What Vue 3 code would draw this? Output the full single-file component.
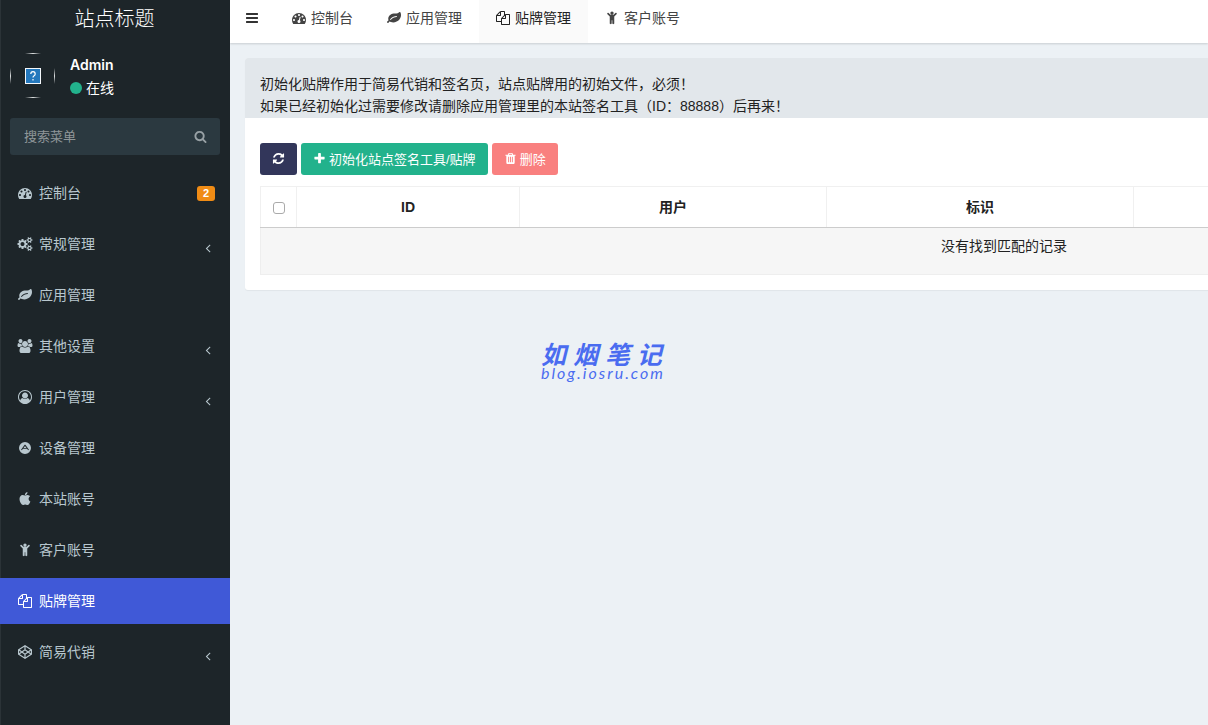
<template>
  <div class="wrapper">
    <aside class="sidebar">
      <a href="#" class="logo">站点标题</a>

      <div class="user-panel">
        <div class="avatar">
          <svg viewBox="0 0 16 16" width="16" height="16" aria-hidden="true">
            <rect width="16" height="16" fill="#f4f8fb" />
            <rect x="1" y="1" width="14" height="14" fill="#2478bd" />
            <path d="M5.8 6q0-2.3 2.2-2.3T10.2 6q0 1-1.1 1.7T8 9.5M8 11v1.4" fill="none" stroke="#fff" stroke-width="1.2" />
          </svg>
        </div>
        <div class="user-info">
          <strong>Admin</strong>
          <span class="status"><i class="dot"></i>在线</span>
        </div>
      </div>

      <form class="search" @submit.prevent>
        <input v-model="keyword" type="text" placeholder="搜索菜单" aria-label="搜索菜单" />
        <button type="submit" aria-label="搜索">
          <svg class="icon" viewBox="0 0 1792 1792"><path :d="icons.search" /></svg>
        </button>
      </form>

      <nav class="menu">
        <a
          v-for="item in menus"
          :key="item.title"
          href="#"
          class="menu-item"
          :class="{ active: item.title === current }"
          @click.prevent="current = item.title"
        >
          <svg
            class="icon"
            :class="{ wide: item.wide }"
            :viewBox="item.wide ? '0 0 1920 1792' : '0 0 1792 1792'"
          >
            <path :d="icons[item.icon]" fill-rule="evenodd" />
          </svg>
          <span>{{ item.title }}</span>
          <span v-if="item.badge" class="badge">{{ item.badge }}</span>
          <svg v-if="item.sub" class="icon arrow" viewBox="0 0 1792 1792">
            <path :d="icons.angle" />
          </svg>
        </a>
      </nav>
    </aside>

    <div class="main">
      <header class="navbar">
        <button class="toggle" type="button" aria-label="菜单">
          <svg class="icon" viewBox="0 0 1792 1792"><path :d="icons.bars" /></svg>
        </button>
        <a
          v-for="tab in tabs"
          :key="tab.title"
          href="#"
          class="tab"
          :class="{ active: tab.title === current }"
          @click.prevent="current = tab.title"
        >
          <svg class="icon" viewBox="0 0 1792 1792">
            <path :d="icons[tab.icon]" fill-rule="evenodd" />
          </svg>
          <span>{{ tab.title }}</span>
        </a>
      </header>

      <main class="content">
        <section class="panel">
          <div class="panel-heading">
            初始化贴牌作用于简易代销和签名页，站点贴牌用的初始文件，必须！<br />
            如果已经初始化过需要修改请删除应用管理里的本站签名工具（ID：88888）后再来！
          </div>
          <div class="panel-body">
            <div class="toolbar">
              <button type="button" class="btn btn-primary" aria-label="刷新">
                <svg class="icon" viewBox="0 0 1792 1792"><path :d="icons.refresh" /></svg>
              </button>
              <button type="button" class="btn btn-success">
                <svg class="icon" viewBox="0 0 1792 1792"><path :d="icons.plus" /></svg>
                <span>初始化站点签名工具/贴牌</span>
              </button>
              <button type="button" class="btn btn-danger">
                <svg class="icon" viewBox="0 0 1792 1792"><path :d="icons.trash" /></svg>
                <span>删除</span>
              </button>
            </div>

            <table>
              <colgroup>
                <col class="col-check" />
                <col class="col-id" />
                <col span="4" />
              </colgroup>
              <thead>
                <tr>
                  <th><input type="checkbox" aria-label="全选" /></th>
                  <th>ID</th>
                  <th>用户</th>
                  <th>标识</th>
                  <th></th>
                  <th></th>
                </tr>
              </thead>
              <tbody>
                <tr>
                  <td colspan="6">没有找到匹配的记录</td>
                </tr>
              </tbody>
            </table>
          </div>
        </section>
      </main>

      <div class="watermark">
        <span class="mark-name">如 烟 笔 记</span>
        <span class="mark-url">blog.iosru.com</span>
      </div>
    </div>
  </div>
</template>

<script setup>
import { ref } from 'vue';

const keyword = ref('');
const current = ref('贴牌管理');

const menus = [
  { title: '控制台', icon: 'dashboard', badge: 2 },
  { title: '常规管理', icon: 'cogs', wide: true, sub: true },
  { title: '应用管理', icon: 'leaf' },
  { title: '其他设置', icon: 'users', wide: true, sub: true },
  { title: '用户管理', icon: 'user', sub: true },
  { title: '设备管理', icon: 'device' },
  { title: '本站账号', icon: 'apple' },
  { title: '客户账号', icon: 'child' },
  { title: '贴牌管理', icon: 'files' },
  { title: '简易代销', icon: 'codepen', sub: true },
];

const tabs = [
  { title: '控制台', icon: 'dashboard' },
  { title: '应用管理', icon: 'leaf' },
  { title: '贴牌管理', icon: 'files' },
  { title: '客户账号', icon: 'child' },
];

const icons = {
  dashboard:
    'M384 1152q0-53-37.5-90.5t-90.5-37.5-90.5 37.5-37.5 90.5 37.5 90.5 90.5 37.5 90.5-37.5 37.5-90.5zm192-448q0-53-37.5-90.5t-90.5-37.5-90.5 37.5-37.5 90.5 37.5 90.5 90.5 37.5 90.5-37.5 37.5-90.5zm428 481l101-382q6-26-7.5-48.5t-38.5-29.5-48 6.5-30 39.5l-101 382q-60 5-107 43.5t-63 98.5q-20 77 20 146t117 89 146-20 89-117q16-60-6-117t-72-91zm660-33q0-53-37.5-90.5t-90.5-37.5-90.5 37.5-37.5 90.5 37.5 90.5 90.5 37.5 90.5-37.5 37.5-90.5zm-640-640q0-53-37.5-90.5t-90.5-37.5-90.5 37.5-37.5 90.5 37.5 90.5 90.5 37.5 90.5-37.5 37.5-90.5zm448 192q0-53-37.5-90.5t-90.5-37.5-90.5 37.5-37.5 90.5 37.5 90.5 90.5 37.5 90.5-37.5 37.5-90.5zm320 448q0 261-141 483-19 29-54 29h-1402q-35 0-54-29-141-221-141-483 0-182 71-348t191-286 286-191 348-71 348 71 286 191 191 286 71 348z',
  cogs:
    'M896 896q0-106-75-181t-181-75-181 75-75 181 75 181 181 75 181-75 75-181zm768 512q0-52-38-90t-90-38-90 38-38 90q0 53 37.5 90.5t90.5 37.5 90.5-37.5 37.5-90.5zm0-1024q0-52-38-90t-90-38-90 38-38 90q0 53 37.5 90.5t90.5 37.5 90.5-37.5 37.5-90.5zm-384 421v185q0 10-7 19.5t-16 10.5l-155 24q-11 35-32 76 34 48 90 115 7 11 7 20 0 12-7 19-23 30-82.5 89.5t-78.5 59.5q-11 0-21-7l-115-90q-37 19-77 31-11 108-23 155-7 24-30 24h-186q-11 0-20-7.5t-10-17.5l-23-153q-34-10-75-31l-118 89q-7 7-20 7-11 0-21-8-144-133-144-160 0-9 7-19 10-14 41-53t47-61q-23-44-35-82l-152-24q-10-1-17-9.5t-7-19.5v-185q0-10 7-19.5t16-10.5l155-24q11-35 32-76-34-48-90-115-7-11-7-20 0-12 7-20 22-30 82-89t79-59q11 0 21 7l115 90q34-18 77-32 11-108 23-154 7-24 30-24h186q11 0 20 7.5t10 17.5l23 153q34 10 75 31l118-89q8-7 20-7 11 0 21 8 144 133 144 160 0 8-7 19-12 16-42 54t-45 60q23 48 34 82l152 23q10 2 17 10.5t7 19.5zm640 533v140q0 16-149 31-12 27-30 52 51 113 51 138 0 4-4 7-122 71-124 71-8 0-46-47t-52-68q-20 2-30 2t-30-2q-14 21-52 68t-46 47q-2 0-124-71-4-3-4-7 0-25 51-138-18-25-30-52-149-15-149-31v-140q0-16 149-31 13-29 30-52-51-113-51-138 0-4 4-7 4-2 35-20t59-34 30-16q8 0 46 46.5t52 67.5q20-2 30-2t30 2q51-71 92-112l6-2q4 0 124 70 4 3 4 7 0 25-51 138 17 23 30 52 149 15 149 31zm0-1024v140q0 16-149 31-12 27-30 52 51 113 51 138 0 4-4 7-122 71-124 71-8 0-46-47t-52-68q-20 2-30 2t-30-2q-14 21-52 68t-46 47q-2 0-124-71-4-3-4-7 0-25 51-138-18-25-30-52-149-15-149-31v-140q0-16 149-31 13-29 30-52-51-113-51-138 0-4 4-7 4-2 35-20t59-34 30-16q8 0 46 46.5t52 67.5q20-2 30-2t30 2q51-71 92-112l6-2q4 0 124 70 4 3 4 7 0 25-51 138 17 23 30 52 149 15 149 31z',
  leaf:
    'M1280 704q0-26-19-45t-45-19q-172 0-318 49.5t-259.5 134-235.5 219.5q-19 21-19 45 0 26 19 45t45 19q24 0 45-19 27-24 74-71t67-66q137-124 268.5-176t313.5-52q26 0 45-19t19-45zm512-198q0 95-20 193-46 224-184.5 383t-357.5 268q-214 108-438 108-148 0-286-47-15-5-88-42t-96-37q-16 0-39.5 32t-45 70-52.5 70-60 32q-43 0-63.5-17.5t-45.5-59.5q-2-4-6-11t-5.5-10-3-9.5-1.5-13.5q0-35 31-73.5t68-65.5 68-56 31-48q0-4-14-38t-16-44q-9-51-9-104 0-115 43.5-220t119-184.5 170.5-139 204-95.5q55-18 145-25.5t179.5-9 178.5-6 163.5-24 113.5-56.5l29.5-29.5 29.5-28 27-20 36.5-16 43.5-4.5q39 0 70.5 46t47.5 112 24 124 8 96z',
  users:
    'M593 896q-162 5-265 128h-134q-82 0-138-40.5t-56-118.5q0-353 124-353 6 0 43.5 21t97.5 42.5 119 21.5q67 0 133-23-5 37-5 66 0 139 81 256zm1071 637q0 120-73 189.5t-194 69.5h-874q-121 0-194-69.5t-73-189.5q0-53 3.5-103.5t14-109 26.5-108.5 43-97.5 62-81 85.5-53.5 111.5-20q10 0 43 21.5t73 48 107 48 135 21.5 135-21.5 107-48 73-48 43-21.5q61 0 111.5 20t85.5 53.5 62 81 43 97.5 26.5 108.5 14 109 3.5 103.5zm-1024-1277q0 106-75 181t-181 75-181-75-75-181 75-181 181-75 181 75 75 181zm704 384q0 159-112.5 271.5t-271.5 112.5-271.5-112.5-112.5-271.5 112.5-271.5 271.5-112.5 271.5 112.5 112.5 271.5zm576 225q0 78-56 118.5t-138 40.5h-134q-103-123-265-128 81-117 81-256 0-29-5-66 66 23 133 23 59 0 119-21.5t97.5-42.5 43.5-21q124 0 124 353zm-128-609q0 106-75 181t-181 75-181-75-75-181 75-181 181-75 181 75 75 181z',
  user:
    'M896 0q182 0 348 71t286 191 191 286 71 348q0 181-70.5 347t-190.5 286-286 191.5-349 71.5-349-71-285.5-191.5-190.5-286-71-347.5 71-348 191-286 286-191 348-71zm619 1351q149-205 149-455 0-156-61-298t-164-245-245-164-298-61-298 61-245 164-164 245-61 298q0 250 149 455 66-327 306-327 131 128 313 128t313-128q240 0 306 327zm-235-647q0-159-112.5-271.5t-271.5-112.5-271.5 112.5-112.5 271.5 112.5 271.5 271.5 112.5 271.5-112.5 112.5-271.5z',
  device:
    'M896 128a768 768 0 1 1 0 1536a768 768 0 1 1 0-1536zM850 490L390 1130L480 1195L640 1000H1152L1312 1195L1402 1130L942 490zM896 630L1080 890H712z',
  apple:
    'M1585 1215q-39 125-123 250-129 196-257 196-49 0-140-32-86-32-151-32-61 0-142 33-81 34-132 34-152 0-301-259-147-261-147-503 0-228 113-374 113-144 284-144 72 0 177 30 104 30 138 30 45 0 143-34 102-34 173-34 119 0 213 65 52 36 104 100-79 67-114 118-65 94-65 207 0 124 69 223t158 126zm-376-1173q0 61-29 136-30 75-93 138-54 54-108 72-37 11-104 17 3-149 78-257 74-107 250-148 1 3 2.5 11t2.5 11q0 4 .5 10t.5 10z',
  child:
    'M1476 412l-292 292v848q0 52-38 90t-90 38-82-38-38-90v-370h-80v370q0 52-38 90t-82 38-90-38-38-90v-848l-292-292q-30-32-30-76t30-76q32-30 76-30t76 30l220 220h416l220-220q32-30 76-30t76 30q30 32 30 76t-30 76zM1110 270a214 214 0 1 1-428 0a214 214 0 1 1 428 0z',
  files:
    'M1696 384q40 0 68 28t28 68v1216q0 40-28 68t-68 28h-960q-40 0-68-28t-28-68v-288h-544q-40 0-68-28t-28-68v-672q0-40 20-88t48-76l408-408q28-28 76-48t88-20h416q40 0 68 28t28 68v328q68-40 128-40h416zm-544 213l-299 299h299v-299zm-640-384l-299 299h299v-299zm196 647l316-316v-416h-384v416q0 40-28 68t-68 28h-416v640h512v-256q0-40 20-88t48-76zm956 804v-1152h-384v416q0 40-28 68t-68 28h-416v640h896z',
  codepen:
    'M896 0L1792 580V1212L896 1792L0 1212V580zM820 230L230 612L492 788L820 570zM972 230V570L1300 788L1562 612zM896 702L628 896L896 1090L1164 896zM152 750V1042L362 896zM1640 750L1430 896L1640 1042zM230 1180L820 1562V1222L492 1004zM1562 1180L1300 1004L972 1222V1562z',
  search:
    'M1216 832q0-185-131.5-316.5t-316.5-131.5-316.5 131.5-131.5 316.5 131.5 316.5 316.5 131.5 316.5-131.5 131.5-316.5zm512 832q0 52-38 90t-90 38q-54 0-90-38l-343-342q-179 124-399 124-143 0-273.5-55.5t-225-150-150-225-55.5-273.5 55.5-273.5 150-225 225-150 273.5-55.5 273.5 55.5 225 150 150 225 55.5 273.5q0 220-124 399l343 343q37 37 37 90z',
  angle:
    'M1203 544q0 13-10 23l-393 393 393 393q10 10 10 23t-10 23l-50 50q-10 10-23 10t-23-10l-466-466q-10-10-10-23t10-23l466-466q10-10 23-10t23 10l50 50q10 10 10 23z',
  bars:
    'M1664 1344v128q0 26-19 45t-45 19h-1408q-26 0-45-19t-19-45v-128q0-26 19-45t45-19h1408q26 0 45 19t19 45zm0-512v128q0 26-19 45t-45 19h-1408q-26 0-45-19t-19-45v-128q0-26 19-45t45-19h1408q26 0 45 19t19 45zm0-512v128q0 26-19 45t-45 19h-1408q-26 0-45-19t-19-45v-128q0-26 19-45t45-19h1408q26 0 45 19t19 45z',
  refresh:
    'M1639 1056q0 5-1 7-64 268-268 434.5t-478 166.5q-146 0-282.5-55t-243.5-157l-129 129q-19 19-45 19t-45-19-19-45v-448q0-26 19-45t45-19h448q26 0 45 19t19 45-19 45l-137 137q71 66 161 102t187 36q134 0 250-65t186-179q11-17 53-117 8-23 30-23h192q13 0 22.5 9.5t9.5 22.5zm25-800v448q0 26-19 45t-45 19h-448q-26 0-45-19t-19-45 19-45l138-138q-148-137-349-137-134 0-250 65t-186 179q-11 17-53 117-8 23-30 23h-199q-13 0-22.5-9.5t-9.5-22.5v-7q65-268 270-434.5t480-166.5q146 0 284 55.5t245 156.5l130-129q19-19 45-19t45 19 19 45z',
  plus:
    'M1600 736v192q0 40-28 68t-68 28h-416v416q0 40-28 68t-68 28h-192q-40 0-68-28t-28-68v-416h-416q-40 0-68-28t-28-68v-192q0-40 28-68t68-28h416v-416q0-40 28-68t68-28h192q40 0 68 28t28 68v416h416q40 0 68 28t28 68z',
  trash:
    'M704 1376v-704q0-14-9-23t-23-9h-64q-14 0-23 9t-9 23v704q0 14 9 23t23 9h64q14 0 23-9t9-23zm256 0v-704q0-14-9-23t-23-9h-64q-14 0-23 9t-9 23v704q0 14 9 23t23 9h64q14 0 23-9t9-23zm256 0v-704q0-14-9-23t-23-9h-64q-14 0-23 9t-9 23v704q0 14 9 23t23 9h64q14 0 23-9t9-23zm-544-992h448l-48-117q-7-9-17-11h-317q-10 2-17 11zm928 32v64q0 14-9 23t-23 9h-96v948q0 83-47 143.5t-113 60.5h-832q-66 0-113-58.5t-47-141.5v-952h-96q-14 0-23-9t-9-23v-64q0-14 9-23t23-9h309l70-167q15-37 54-63t79-26h320q40 0 79 26t54 63l70 167h309q14 0 23 9t9 23z',
};
</script>

<style>
body {
  margin: 0;
  background: #ecf1f5;
}
</style>

<style scoped>
.wrapper {
  display: flex;
  min-height: 100vh;
  overflow: hidden;
  font-family: "Liberation Sans", "Noto Sans CJK SC", sans-serif;
  font-size: 14px;
  line-height: 22px;
  color: #222;
  background: #ecf1f5;
}

.wrapper * {
  box-sizing: border-box;
}

a {
  color: inherit;
  text-decoration: none;
}

button,
input {
  font-family: inherit;
}

.icon {
  flex: none;
  width: 14px;
  height: 14px;
  fill: currentColor;
}

.icon.wide {
  width: 16px;
  margin: 0 -1px;
}

/* 侧边栏 */
.sidebar {
  flex: none;
  width: 230px;
  background: #1d2529;
  border-left: 1px solid #2b3337;
  color: #b8c7ce;
}

.logo {
  display: block;
  height: 43px;
  padding-right: 2px;
  line-height: 38px;
  text-align: center;
  font-size: 20px;
  font-weight: 300;
  color: #fff;
}

.user-panel {
  display: flex;
  gap: 15px;
  padding: 10px 9px;
  color: #fff;
}

.avatar {
  display: flex;
  align-items: center;
  justify-content: center;
  width: 45px;
  height: 45px;
  /* 加载失败的头像，只露出四边的弧线 */
  background:
    linear-gradient(90deg, transparent, #dfe2e3, transparent) center top / 16px 1px no-repeat,
    linear-gradient(90deg, transparent, #dfe2e3, transparent) center bottom / 16px 1px no-repeat,
    linear-gradient(transparent, #dfe2e3, transparent) left center / 1px 16px no-repeat,
    linear-gradient(transparent, #dfe2e3, transparent) right center / 1px 16px no-repeat;
}

.user-info {
  display: flex;
  flex-direction: column;
  gap: 1px;
  padding-top: 1px;
}

.user-info strong {
  font-family: Inter, "Liberation Sans", sans-serif;
  font-weight: 600;
}

.status {
  display: flex;
  align-items: center;
  gap: 4px;
}

.dot {
  width: 12px;
  height: 12px;
  border-radius: 50%;
  background: #22b28c;
}

.search {
  display: flex;
  margin: 9px 10px 15px 9px;
  height: 37px;
  background: #2b3940;
  border-radius: 3px;
}

.search input {
  flex: 1;
  min-width: 0;
  padding: 0 14px;
  border: 0;
  outline: none;
  background: transparent;
  color: #b8c7ce;
  font-size: 13px;
}

.search input::placeholder {
  color: #8f9699;
}

.search button {
  display: flex;
  align-items: center;
  justify-content: center;
  width: 40px;
  border: 0;
  background: transparent;
  color: #98a1a5;
  cursor: pointer;
}

.search .icon {
  width: 13px;
  height: 13px;
}

.menu {
  display: flex;
  flex-direction: column;
  gap: 5px;
}

.menu-item {
  display: flex;
  align-items: center;
  gap: 7px;
  height: 46px;
  margin-left: -1px;
  padding: 0 15px 0 18px;
}

.menu-item.active {
  background: #4059d7;
  color: #fff;
}

.badge {
  margin-left: auto;
  padding: 0 6px;
  border-radius: 3px;
  background: #f08c15;
  color: #fff;
  font-size: 11px;
  font-weight: 700;
  line-height: 15px;
}

.arrow {
  margin: 8px 0 0 auto;
}

/* 顶部导航 */
.main {
  flex: 1;
  min-width: 0;
  overflow: hidden;
}

.navbar {
  display: flex;
  height: 43px;
  background: #fff;
  box-shadow: 0 1px 2px rgba(0, 0, 0, 0.15);
  color: #444;
}

.toggle {
  display: flex;
  width: 45px;
  padding: 11px 15px;
  border: 0;
  background: transparent;
  color: #333;
  cursor: pointer;
}

.tab {
  display: flex;
  gap: 5px;
  padding: 7px 17px;
}

.tab .icon {
  margin-top: 4px;
}

.tab.active {
  background: #fafafa;
  color: #222;
}

/* 内容区 */
.content {
  padding: 15px;
}

.panel {
  min-width: 1518px;
  background: #fff;
  border-radius: 3px;
  box-shadow: 0 1px 1px rgba(0, 0, 0, 0.05);
}

.panel-heading {
  padding: 15px 15px 1px;
  background: #e2e7eb;
  border-radius: 3px 3px 0 0;
}

.panel-body {
  padding: 25px 15px 15px;
}

.toolbar {
  display: flex;
  gap: 4px;
  margin-bottom: 11px;
}

.btn {
  display: flex;
  align-items: center;
  gap: 3px;
  height: 32px;
  padding: 0 12px 2px;
  border: 0;
  border-radius: 3px;
  color: #fff;
  font-size: 13px;
  cursor: pointer;
}

.btn .icon {
  width: 13px;
  height: 13px;
}

.btn-primary {
  background: #32365a;
}
.btn-success {
  background: #22b28c;
}
.btn-danger {
  background: #f9807f;
}

table {
  width: 100%;
  table-layout: fixed;
  border-collapse: collapse;
  text-align: center;
}

.col-check {
  width: 36px;
}
.col-id {
  width: 223px;
}

th {
  height: 41px;
  padding: 0;
  border: 1px solid #f0f0f0;
  border-bottom-color: #ccc;
}

th input {
  display: block;
  width: 12px;
  height: 12px;
  margin: 2px auto 0;
  appearance: none;
  border: 1px solid #aaa;
  border-radius: 3px;
  background: #fff;
}

td {
  height: 47px;
  padding: 7px 0 17px;
  border: 1px solid #eee;
  background: #f6f6f6;
}

/* 水印 */
.watermark {
  position: absolute;
  top: 343px;
  left: 541px;
  display: flex;
  flex-direction: column;
  font-style: italic;
  color: #4a6cf0;
}

.mark-name {
  font-size: 25px;
  font-weight: 700;
  line-height: 24px;
}

.mark-url {
  font-family: Lato, sans-serif;
  font-size: 16px;
  line-height: 12px;
  letter-spacing: 2px;
}
</style>
